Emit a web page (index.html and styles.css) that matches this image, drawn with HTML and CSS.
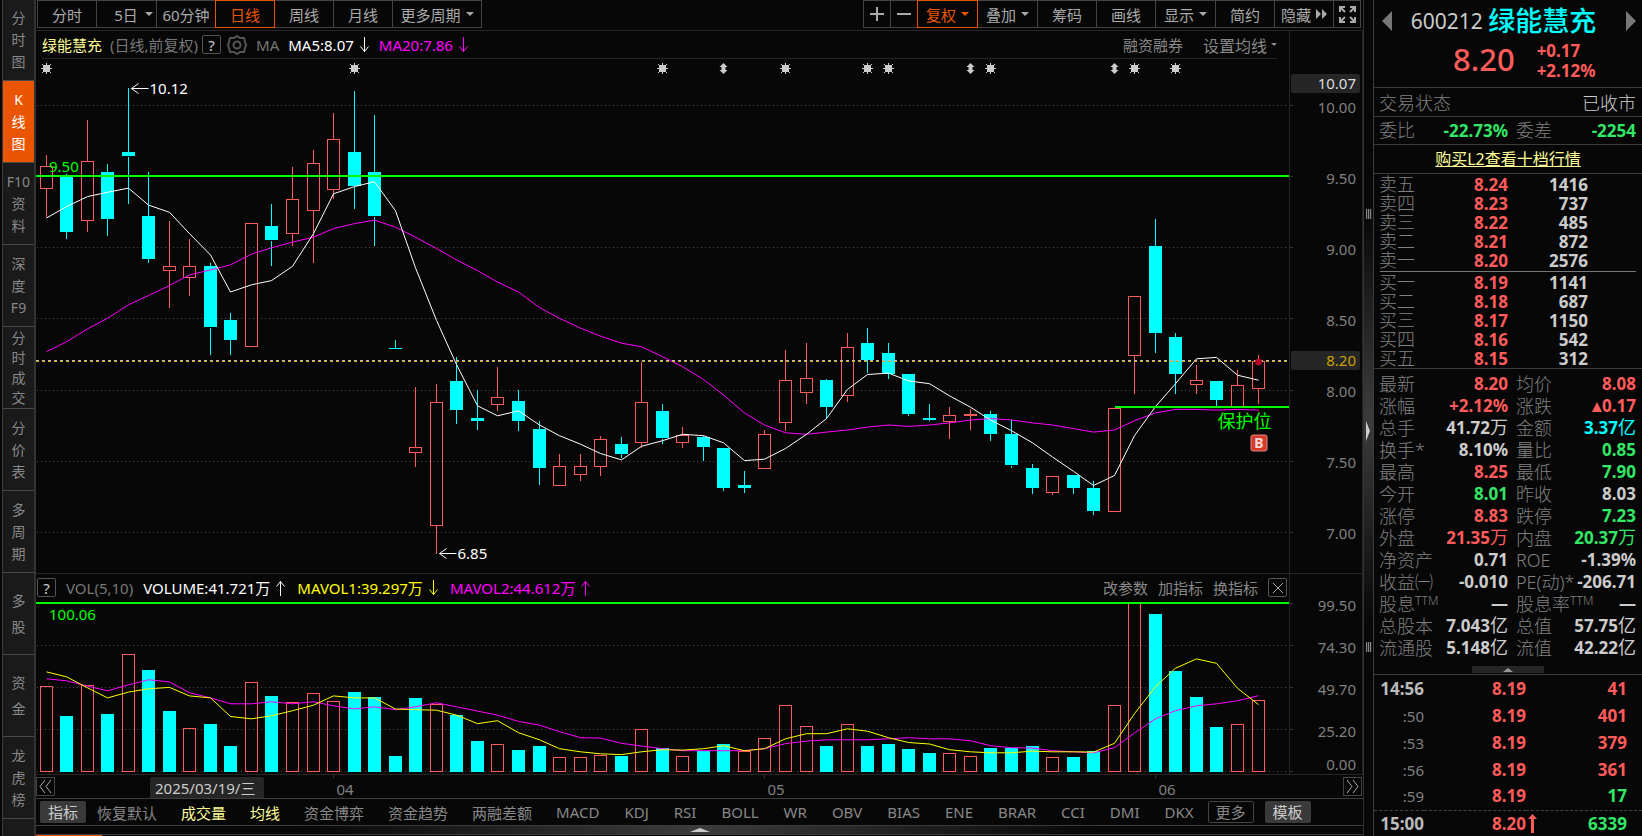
FILE: index.html
```
<!DOCTYPE html>
<html lang="zh-CN">
<head>
    <meta charset="UTF-8">
    <meta name="viewport" content="width=device-width, initial-scale=1.0">
    <title>绿能慧充 600212</title>
    <link rel="stylesheet" href="styles.css">
</head>
<body>

<div class="app">

    <nav class="side-nav">
        <a href="#"><span>分</span><span>时</span><span>图</span></a>
        <a href="#" class="active"><span>K</span><span>线</span><span>图</span></a>
        <a href="#"><span>F10</span><span>资</span><span>料</span></a>
        <a href="#"><span>深</span><span>度</span><span>F9</span></a>
        <a href="#" class="tight"><span>分</span><span>时</span><span>成</span><span>交</span></a>
        <a href="#"><span>分</span><span>价</span><span>表</span></a>
        <a href="#"><span>多</span><span>周</span><span>期</span></a>
        <a href="#" class="loose"><span>多</span><span>股</span></a>
        <a href="#" class="loose"><span>资</span><span>金</span></a>
        <a href="#"><span>龙</span><span>虎</span><span>榜</span></a>
    </nav>

    <main class="main">
        <div class="toolbar">
            <div class="btn-group">
                <button>分时</button>
                <button class="has-caret">5日<i class="caret"></i></button>
                <button>60分钟</button>
                <button class="active">日线</button>
                <button>周线</button>
                <button>月线</button>
                <button class="wide">更多周期<i class="caret"></i></button>
            </div>
            <div class="btn-group">
                <button class="icon-btn" aria-label="放大"><svg width="14" height="14"><path d="M7 0v14M0 7h14" stroke="#aaa" stroke-width="2"/></svg></button>
                <button class="icon-btn" aria-label="缩小"><svg width="14" height="14"><path d="M0 7h14" stroke="#aaa" stroke-width="2"/></svg></button>
                <button class="menu active">复权<i class="caret"></i></button>
                <button class="menu">叠加<i class="caret"></i></button>
                <button>筹码</button>
                <button>画线</button>
                <button class="menu">显示<i class="caret"></i></button>
                <button>简约</button>
                <button>隐藏<svg width="11" height="10"><path d="M0 0l5 5-5 5zM6 0l5 5-5 5z" fill="#aaa"/></svg></button>
                <button class="icon-btn" aria-label="全屏">
                    <svg width="17" height="17" fill="none" stroke="#aaa" stroke-width="2">
                        <path d="M1 6V1h5M1 1l5 5M11 1h5v5M16 1l-5 5M1 11v5h5M1 16l5-5M16 11v5h-5M16 16l-5-5"/>
                    </svg>
                </button>
            </div>
        </div>

        <section class="pane price-pane">
            <header class="pane-head ruled">
                <span class="stock">绿能慧充</span>
                <span class="muted">(日线,前复权)</span>
                <button class="help">?</button>
                <svg class="gear" width="20" height="20" fill="none" stroke="#555" stroke-width="2">
                    <path d="M10 1l3 2 4 0 1 4 1 3-1 3-1 4-4 0-3 2-3-2-4 0-1-4-1-3 1-3 1-4 4 0z"/>
                    <circle cx="10" cy="10" r="3.5"/>
                </svg>
                <span class="muted ma-name">MA</span>
                <span class="ind white">MA5:8.07<svg width="9" height="16"><path d="M4.500 0v15M.5 9.500l4 5 4-5" /></svg></span>
                <span class="ind magenta">MA20:7.86<svg width="9" height="16"><path d="M4.500 0v15M.5 9.500l4 5 4-5" /></svg></span>
                <a href="#" class="push">融资融券</a>
                <a href="#" class="ma-set">设置均线<i class="caret"></i></a>
            </header>
            <svg class="plot" id="pricePlot"></svg>
            <svg class="axis" id="priceAxis"></svg>
        </section>

        <section class="pane vol-pane">
            <header class="pane-head">
                <button class="help">?</button>
                <span class="muted">VOL(5,10)</span>
                <span class="ind white">VOLUME:41.721万<svg width="9" height="16"><path d="M4.500 16v-15M.5 6.500l4-5 4 5" /></svg></span>
                <span class="ind yellow">MAVOL1:39.297万<svg width="9" height="16"><path d="M4.500 0v15M.5 9.500l4 5 4-5" /></svg></span>
                <span class="ind magenta">MAVOL2:44.612万<svg width="9" height="16"><path d="M4.500 16v-15M.5 6.500l4-5 4 5" /></svg></span>
                <a href="#" class="push">改参数</a>
                <a href="#">加指标</a>
                <a href="#">换指标</a>
                <button class="help close" aria-label="关闭"><svg width="10" height="10"><path d="M0 0l10 10M10 0L0 10" stroke="#aaa"/></svg></button>
            </header>
            <svg class="plot" id="volPlot"></svg>
            <svg class="axis" id="volAxis"></svg>
        </section>

        <div class="date-row">
            <svg class="plot" id="dateAxis"></svg>
            <button class="page-btn prev" aria-label="向前"><svg width="13" height="13"><path d="M6 0L1 6.500l5 6.500M12 0L7 6.500l5 6.500"/></svg></button>
            <button class="page-btn next" aria-label="向后"><svg width="13" height="13"><path d="M1 0l5 6.500L1 13M7 0l5 6.500L7 13"/></svg></button>
        </div>

        <div class="tabs">
            <button class="solid">指标</button>
            <a href="#">恢复默认</a>
            <a href="#" class="on">成交量</a>
            <a href="#" class="on">均线</a>
            <a href="#">资金博弈</a>
            <a href="#">资金趋势</a>
            <a href="#">两融差额</a>
            <a href="#">MACD</a>
            <a href="#">KDJ</a>
            <a href="#">RSI</a>
            <a href="#">BOLL</a>
            <a href="#">WR</a>
            <a href="#">OBV</a>
            <a href="#">BIAS</a>
            <a href="#">ENE</a>
            <a href="#">BRAR</a>
            <a href="#">CCI</a>
            <a href="#">DMI</a>
            <a href="#">DKX</a>
            <button class="outline">更多</button>
            <button class="solid">模板</button>
        </div>
        <div class="drawer"><svg width="20" height="4"><path d="M0 4l10-4 10 4z" fill="#ccc"/></svg></div>
        <div class="drawer-tabs"></div>
    </main>

    <div class="splitter">
        <i class="grip"></i>
        <svg width="5" height="20"><path d="M0 0l4 10-4 10z" fill="#ccc"/></svg>
        <i class="grip"></i>
    </div>

    <aside class="quote">
        <div class="quote-head">
            <div class="quote-name">
                <button class="step" aria-label="上一只"><svg width="10" height="20"><path d="M10 0v20L0 10z" fill="#777"/></svg></button>
                <span class="code">600212</span>
                <span class="name">绿能慧充</span>
                <button class="step" aria-label="下一只"><svg width="10" height="20"><path d="M0 0v20L10 10z" fill="#777"/></svg></button>
            </div>
            <div class="quote-price">
                <span class="last">8.20</span>
                <span class="chg">+0.17<br>+2.12%</span>
            </div>
        </div>

        <div class="line state"><span>交易状态</span><span class="val">已收市</span></div>

        <table class="pairs ratio">
            <tr><th>委比</th><td class="green">-22.73%</td><th>委差</th><td class="green">-2254</td></tr>
        </table>

        <div class="l2"><a href="#">购买L2查看十档行情</a></div>

        <table class="book">
            <tbody class="sell">
                <tr><th>卖五</th><td class="red">8.24</td><td>1416</td></tr>
                <tr><th>卖四</th><td class="red">8.23</td><td>737</td></tr>
                <tr><th>卖三</th><td class="red">8.22</td><td>485</td></tr>
                <tr><th>卖二</th><td class="red">8.21</td><td>872</td></tr>
                <tr><th>卖一</th><td class="red">8.20</td><td>2576</td></tr>
            </tbody>
        </table>
        <hr>
        <table class="book">
            <tbody>
                <tr><th>买一</th><td class="red">8.19</td><td>1141</td></tr>
                <tr><th>买二</th><td class="red">8.18</td><td>687</td></tr>
                <tr><th>买三</th><td class="red">8.17</td><td>1150</td></tr>
                <tr><th>买四</th><td class="red">8.16</td><td>542</td></tr>
                <tr><th>买五</th><td class="red">8.15</td><td>312</td></tr>
            </tbody>
        </table>

        <div class="details">
            <table class="pairs">
                <tr><th>最新</th><td class="red">8.20</td><th>均价</th><td class="red">8.08</td></tr>
                <tr><th>涨幅</th><td class="red">+2.12%</td><th>涨跌</th><td class="red"><i class="up"></i>0.17</td></tr>
                <tr><th>总手</th><td>41.72<span>万</span></td><th>金额</th><td class="cyan">3.37<span>亿</span></td></tr>
                <tr><th>换手*</th><td>8.10%</td><th>量比</th><td class="green">0.85</td></tr>
                <tr><th>最高</th><td class="red">8.25</td><th>最低</th><td class="green">7.90</td></tr>
                <tr><th>今开</th><td class="green">8.01</td><th>昨收</th><td>8.03</td></tr>
                <tr><th>涨停</th><td class="red">8.83</td><th>跌停</th><td class="green">7.23</td></tr>
                <tr><th>外盘</th><td class="red">21.35<span>万</span></td><th>内盘</th><td class="green">20.37<span>万</span></td></tr>
                <tr><th>净资产</th><td>0.71</td><th>ROE</th><td>-1.39%</td></tr>
                <tr><th>收益㈠</th><td>-0.010</td><th>PE(动)*</th><td>-206.71</td></tr>
                <tr><th>股息<sup>TTM</sup></th><td>—</td><th>股息率<sup>TTM</sup></th><td>—</td></tr>
                <tr><th>总股本</th><td>7.043<span>亿</span></td><th>总值</th><td>57.75<span>亿</span></td></tr>
                <tr><th>流通股</th><td>5.148<span>亿</span></td><th>流值</th><td>42.22<span>亿</span></td></tr>
            </table>
            <button class="fold" aria-label="收起"><svg width="10" height="4"><path d="M0 4l5-4 5 4z" fill="#999"/></svg></button>
        </div>

        <table class="ticks">
            <tr><th class="minute">14:56</th><td class="red">8.19</td><td class="red">41</td></tr>
            <tr><th>:50</th><td class="red">8.19</td><td class="red">401</td></tr>
            <tr><th>:53</th><td class="red">8.19</td><td class="red">379</td></tr>
            <tr><th>:56</th><td class="red">8.19</td><td class="red">361</td></tr>
            <tr><th>:59</th><td class="red">8.19</td><td class="green">17</td></tr>
            <tr class="closing"><th class="minute">15:00</th><td class="red">8.20<svg width="9" height="19"><path d="M3 19V5H0l4.500-5L9 5H6v14z" fill="#ff5b5b"/></svg></td><td class="green">6339</td></tr>
        </table>
    </aside>

</div>

<script src="chart.js"></script>
</body>
</html>
```

FILE: styles.css
```
* {
    box-sizing: border-box;
}

body {
    margin: 0;
    background: #070707;
    color: #ccc;
    font-family: "Noto Sans", "Noto Sans CJK SC", sans-serif;
    font-size: 15px;
    overflow: hidden;
}

a {
    color: inherit;
    text-decoration: none;
}

button {
    font: inherit;
    color: inherit;
    padding: 0;
    background: none;
    border: 1px solid #444;
}

svg {
    display: block;
}

.app {
    display: grid;
    grid-template-columns: 36px minmax(0, 1fr) 10px 269px;
    grid-template-rows: minmax(0, 1fr);
    height: 100vh;
    overflow: hidden;
}

/* colours */
.red { color: #ff5b5b; }
.green { color: #33e666; }
.cyan { color: #00ffff; }
.white { color: #fff; }
.yellow { color: #ffff00; }
.magenta { color: #ff00ff; }
.muted { color: #777; }

/* left navigation */
.side-nav {
    display: flex;
    flex-direction: column;
    margin-left: 2px;
    background: #1a1a1a;
    border-left: 1px solid #3c3c3c;
    border-right: 2px solid #333;
    font-size: 14px;
    line-height: 22px;
    color: #888;
    overflow: hidden;
}

.side-nav a {
    flex: none;
    display: flex;
    flex-direction: column;
    justify-content: center;
    align-items: center;
    height: 82px;
    border-bottom: 1px solid #4a4a4a;
}

.side-nav a:first-child {
    height: 81px;
}

.side-nav .active {
    background: #ea5504;
    color: #fff;
}

.side-nav .tight {
    line-height: 20px;
}

.side-nav .loose {
    line-height: 26px;
}

/* toolbar */
.main {
    display: flex;
    flex-direction: column;
    min-width: 0;
}

.toolbar {
    display: flex;
    justify-content: space-between;
    height: 30px;
    padding: 0 3px 0 1px;
}

.btn-group {
    display: flex;
    height: 28px;
    color: #aaa;
}

.btn-group button {
    display: flex;
    align-items: center;
    justify-content: center;
    gap: 5px;
    width: 60px;
    margin-right: -1px;
    white-space: nowrap;
}

.btn-group .has-caret {
    gap: 7px;
    padding-left: 14px;
    width: 61px;
}

.btn-group .menu {
    width: 61px;
}

.btn-group .wide {
    width: 90px;
}

.btn-group .icon-btn {
    width: 28px;
}

.btn-group .active {
    position: relative;
    border-color: #ea5504;
    color: #ea5504;
}

.caret {
    border: 4px solid transparent;
    border-top-color: currentColor;
    border-bottom: 0;
}

/* chart panes */
.pane {
    display: grid;
    grid-template-columns: minmax(0, 1fr) 74px;
    grid-template-rows: 28px minmax(0, 1fr);
    border-top: 1px solid #262626;
    min-height: 0;
}

.price-pane {
    flex: 543;
}

.vol-pane {
    flex: 201;
}

.pane-head {
    display: flex;
    align-items: center;
    gap: 10px;
    padding: 0 2px 0 1px;
    white-space: nowrap;
}

.plot {
    width: 100%;
    height: 100%;
    overflow: hidden;
}

.axis {
    grid-column: 2;
    grid-row: 1 / 3;
    width: 100%;
    height: 100%;
    border-left: 1px solid #262626;
    border-right: 1px solid #262626;
}

.pane-head .stock {
    margin-right: 4px;
    color: #ffff99;
}

.pane-head .help {
    display: flex;
    align-items: center;
    justify-content: center;
    width: 19px;
    height: 19px;
    border-radius: 2px;
    border-color: #555;
}

.pane-head a {
    color: #888;
}

.pane-head .push {
    margin-left: auto;
}

.pane-head .ma-set {
    display: flex;
    align-items: center;
    gap: 4px;
    margin-left: 16px;
    font-size: 16px;
}

.ma-set .caret {
    border-width: 3px 3px 0;
}

.ind {
    display: flex;
    align-items: center;
    gap: 6px;
    margin-right: 2px;
}

.ind svg {
    fill: none;
    stroke: currentColor;
}

.pane-head.ruled {
    margin: 0 12px 0 6px;
    padding: 0;
    gap: 4px;
    border-bottom: 1px solid #262626;
}

.ruled .help {
    margin-right: 2px;
}

.gear,
.ma-name {
    margin-right: 5px;
}

.ruled .ind {
    margin-right: 6px;
}

/* svg parts drawn by chart.js */
.grid-line {
    stroke: #4a4a4a;
    stroke-dasharray: 1 3;
}

.grid-line,
.tick,
.wick,
.candle,
.level {
    shape-rendering: crispEdges;
}

.tick {
    stroke: #333;
}

.rise {
    fill: none;
    stroke: #ff5b5b;
}

.fall {
    fill: #00ffff;
    stroke: none;
}

line.fall {
    stroke: #00ffff;
}

.ma {
    fill: none;
    stroke-width: 1;
}

.axis-text {
    fill: #808080;
    font-size: 15px;
}

.tag {
    fill: #262626;
}

/* dates */
.date-row {
    position: relative;
    display: grid;
    grid-template-columns: minmax(0, 1fr) 74px;
    height: 24px;
    border-top: 1px solid #262626;
}

.page-btn {
    position: absolute;
    top: 2px;
    display: flex;
    align-items: center;
    justify-content: center;
    width: 19px;
    height: 19px;
    background: #070707;
}

.page-btn path {
    fill: none;
    stroke: #aaa;
}

.page-btn.prev {
    left: 0;
}

.page-btn.next {
    right: 1px;
}

/* indicator tabs */
.tabs {
    display: flex;
    align-items: center;
    gap: 24px;
    height: 28px;
    padding-left: 4px;
    border-top: 1px solid #3c3c3c;
    border-bottom: 1px solid #3c3c3c;
    color: #888;
    white-space: nowrap;
}

.tabs a:nth-child(n+8) {
    margin-right: 1px;
}

.tabs .on {
    color: #ffff99;
}

.tabs button {
    width: 46px;
    height: 22px;
    line-height: 20px;
    border-radius: 2px;
}

.tabs .solid {
    background: #3a3a3a;
    border: 0;
    color: #ccc;
    margin-right: -13px;
}

.tabs .outline {
    margin: 0 -13px 0 -11px;
}

.drawer {
    display: flex;
    align-items: center;
    justify-content: center;
    height: 9px;
    background: linear-gradient(90deg, #070707 20%, #3c3c3c 50%, #070707 80%);
    border-bottom: 1px solid #3c3c3c;
}

.drawer-tabs {
    width: 66px;
    height: 1px;
    background: #ea5504;
}

/* splitter */
.splitter {
    display: flex;
    flex-direction: column;
    align-items: center;
    justify-content: space-between;
    padding: 25vh 0 22vh;
    border-left: 1px solid #333;
    background: linear-gradient(#070707 25%, #3c3c3c 50%, #070707 75%);
}

.grip {
    width: 6px;
    height: 10px;
    background: repeating-linear-gradient(90deg, #888 0 1px, #222 1px 2px);
}

/* quote panel */
.quote {
    display: flex;
    flex-direction: column;
    border-left: 1px solid #3c3c3c;
    font-size: 17px;
}

.quote-head {
    height: 88px;
    border-bottom: 1px solid #3c3c3c;
}

.quote-name {
    display: flex;
    align-items: center;
    justify-content: space-between;
    height: 41px;
    padding: 0 6px 0 8px;
}

.step {
    border: 0;
}

.code {
    margin-left: 13px;
    font-size: 21px;
}

.name {
    margin-right: 24px;
    font-size: 27px;
    font-weight: 500;
    line-height: 40px;
    color: #00ffff;
}

.quote-price {
    display: flex;
    gap: 22px;
    padding-left: 79px;
    color: #ff5b5b;
}

.last {
    font-size: 31px;
    font-weight: 500;
    line-height: 36px;
}

.chg {
    font-weight: bold;
    line-height: 20px;
}

.line {
    display: flex;
    justify-content: space-between;
    align-items: center;
    height: 29px;
    padding: 0 6px 0 5px;
    border-bottom: 1px solid #3c3c3c;
    font-size: 18px;
    color: #808080;
    font-weight: 300;
}

.line .val {
    color: #ccc;
}

.l2 {
    height: 29px;
    line-height: 28px;
    border-bottom: 1px solid #3c3c3c;
    text-align: center;
    font-size: 16px;
}

.l2 a {
    color: #ffff99;
    text-decoration: underline;
}

.quote table {
    width: 100%;
    border-collapse: collapse;
    table-layout: fixed;
}

.quote th,
.quote td {
    padding: 0;
    vertical-align: middle;
    white-space: nowrap;
}

.quote th {
    text-align: left;
    font-size: 18px;
    font-weight: 300;
    color: #808080;
}

.quote td {
    text-align: right;
    font-weight: bold;
}

.quote td span {
    font-size: 18px;
    font-weight: 400;
    line-height: 1;
}

.quote .pairs th:first-child,
.quote .book th {
    width: 62px;
    padding-left: 5px;
}

.quote .pairs th:nth-child(3) {
    width: 62px;
    padding-left: 8px;
}

.pairs td:nth-child(2),
.book td:nth-child(2) {
    width: 72px;
}

.quote .pairs td:last-child {
    padding-right: 6px;
}

.quote .book td:last-child {
    padding-right: 54px;
}

.pairs tr > * {
    height: 22px;
    line-height: 22px;
}

.pairs sup {
    font-size: 12px;
    line-height: 0;
    vertical-align: 6px;
}

.quote .ratio {
    border-bottom: 1px solid #3c3c3c;
}

.ratio tr > * {
    height: 27px;
    line-height: 27px;
}

.book {
    margin-top: 1px;
}

.book tr > * {
    height: 19px;
    line-height: 19px;
}

.quote hr {
    width: calc(100% - 12px);
    height: 1px;
    margin: 1px 6px 0;
    border: 0;
    background: #777;
}

.up {
    display: inline-block;
    border: 5px solid transparent;
    border-top: 0;
    border-bottom: 10px solid #ff5b5b;
}

.details {
    border-top: 1px solid #3c3c3c;
    border-bottom: 1px solid #3c3c3c;
    padding-top: 4px;
}

.fold {
    display: flex;
    align-items: center;
    justify-content: center;
    width: 72px;
    height: 7px;
    margin: 7px auto 1px;
    background: #262626;
    border: 0;
}

.ticks tr > * {
    height: 27px;
    line-height: 26px;
}

.quote .ticks th {
    width: 50px;
    font-size: 15px;
    font-weight: 400;
    text-align: right;
}

.quote .ticks .minute {
    font-size: 17px;
    font-weight: bold;
    color: #bbb;
}

.ticks td:nth-child(2) {
    width: 102px;
}

.quote .ticks td:last-child {
    padding-right: 15px;
}

.ticks td svg {
    float: right;
    margin: 3px -11px 0 2px;
}

.ticks .closing > * {
    height: 26px;
    line-height: 25px;
    border-top: 1px dashed #444;
}
```

FILE: chart.js
```
// [type, body top, body bottom, high, low, volume, volume type if it differs]
const days = [
    ['r', 9.57, 9.42, 9.65, 9.22, 49.9], ['f', 9.50, 9.11, 9.52, 9.06, 32.3],
    ['r', 9.61, 9.19, 9.90, 9.11, 50.4], ['f', 9.53, 9.20, 9.59, 9.08, 33.5],
    ['f', 9.67, 9.64, 10.12, 9.31, 68.8, 'r'], ['f', 9.22, 8.92, 9.53, 8.89, 59.5],
    ['r', 8.87, 8.84, 9.19, 8.58, 35.3, 'f'], ['r', 8.87, 8.79, 9.06, 8.66, 25],
    ['f', 8.87, 8.44, 8.89, 8.25, 27.6], ['f', 8.49, 8.35, 8.54, 8.25, 14.6],
    ['r', 9.17, 8.31, 9.17, 8.30, 52.2], ['f', 9.15, 9.05, 9.31, 8.87, 44.1],
    ['r', 9.34, 9.10, 9.57, 9.01, 40.4], ['r', 9.59, 9.26, 9.69, 8.89, 45.7],
    ['r', 9.76, 9.41, 9.95, 9.34, 41], ['f', 9.67, 9.43, 10.10, 9.27, 46.5],
    ['f', 9.53, 9.22, 9.93, 9.01, 43.5], ['f', 8.29, 8.29, 8.35, 8.29, 8.7],
    ['r', 7.60, 7.56, 8.02, 7.46, 43, 'f'], ['r', 7.91, 7.05, 8.04, 6.85, 39.2],
    ['f', 8.06, 7.86, 8.23, 7.76, 32.9], ['f', 7.80, 7.78, 8.00, 7.72, 17.5],
    ['r', 7.95, 7.90, 8.16, 7.85, 15.6], ['f', 7.92, 7.78, 8.00, 7.71, 12.2],
    ['f', 7.72, 7.45, 7.78, 7.33, 14.6], ['r', 7.46, 7.33, 7.55, 7.33, 7.9],
    ['r', 7.46, 7.41, 7.55, 7.36, 7.9], ['r', 7.65, 7.46, 7.68, 7.40, 9.1],
    ['f', 7.62, 7.55, 7.67, 7.52, 8.7], ['r', 7.91, 7.63, 8.20, 7.59, 24.4],
    ['f', 7.85, 7.66, 7.90, 7.62, 13.4], ['r', 7.68, 7.63, 7.74, 7.59, 8.5],
    ['f', 7.67, 7.60, 7.68, 7.50, 11.8], ['f', 7.59, 7.31, 7.59, 7.29, 15.8],
    ['f', 7.33, 7.31, 7.43, 7.28, 11.4, 'r'], ['r', 7.69, 7.45, 7.72, 7.45, 19.1],
    ['r', 8.07, 7.77, 8.28, 7.71, 38.6], ['r', 8.08, 7.98, 8.33, 7.90, 26.2],
    ['f', 8.07, 7.88, 8.08, 7.80, 14.6], ['r', 8.30, 7.96, 8.40, 7.92, 27.4],
    ['f', 8.33, 8.21, 8.44, 8.12, 14.6], ['f', 8.26, 8.11, 8.33, 8.08, 15.8],
    ['f', 8.11, 7.83, 8.11, 7.82, 12.8], ['f', 7.80, 7.79, 7.90, 7.78, 10.4],
    ['r', 7.82, 7.78, 7.88, 7.66, 10.2], ['r', 7.83, 7.82, 7.87, 7.72, 8.5],
    ['f', 7.83, 7.69, 7.85, 7.64, 13.4], ['f', 7.69, 7.47, 7.79, 7.45, 13.4],
    ['f', 7.45, 7.31, 7.48, 7.27, 14.6], ['r', 7.39, 7.28, 7.39, 7.26, 7.9],
    ['f', 7.40, 7.31, 7.40, 7.27, 8.1], ['f', 7.31, 7.15, 7.36, 7.12, 11.6],
    ['r', 7.87, 7.15, 7.87, 7.15, 38.6], ['r', 8.66, 8.24, 8.66, 7.97, 99.5],
    ['f', 9.01, 8.40, 9.20, 8.26, 92.6], ['f', 8.37, 8.11, 8.40, 7.97, 58.9],
    ['r', 8.07, 8.04, 8.18, 7.97, 43.5, 'f'], ['f', 8.06, 7.93, 8.06, 7.88, 25.8],
    ['r', 8.03, 7.88, 8.14, 7.88, 27.4], ['r', 8.20, 8.01, 8.25, 7.90, 41.6]
];

const ma5 = [9.21, 9.29, 9.36, 9.39, 9.42, 9.30, 9.25, 9.10, 8.95, 8.69, 8.74, 8.77, 8.87, 9.10, 9.38, 9.43, 9.465, 9.26, 8.86, 8.49,
    8.18, 7.89, 7.82, 7.855, 7.755, 7.68, 7.62, 7.555, 7.51, 7.605, 7.645, 7.69, 7.68, 7.63, 7.505, 7.515, 7.59, 7.69, 7.80, 8.005,
    8.11, 8.12, 8.065, 8.045, 7.96, 7.88, 7.79, 7.715, 7.63, 7.53, 7.43, 7.33, 7.40, 7.68, 7.885, 8.045, 8.22, 8.23, 8.105, 8.07];

const ma20 = [8.27, 8.34, 8.43, 8.505, 8.60, 8.665, 8.735, 8.81, 8.845, 8.88, 8.955, 9.00, 9.04, 9.075, 9.135, 9.17, 9.195, 9.145, 9.075, 8.995,
    8.915, 8.84, 8.76, 8.69, 8.58, 8.505, 8.435, 8.38, 8.33, 8.305, 8.235, 8.165, 8.075, 7.965, 7.84, 7.755, 7.70, 7.69, 7.705, 7.72,
    7.74, 7.755, 7.745, 7.755, 7.77, 7.79, 7.80, 7.79, 7.77, 7.755, 7.73, 7.705, 7.72, 7.785, 7.84, 7.865, 7.865, 7.86, 7.865, 7.86];

const mavol1 = [58.7, 55.8, 49.3, 43.3, 46.7, 48.7, 49.5, 44.5, 43.3, 32.3, 30.9, 32.7, 35.7, 39, 44.5, 43.3, 43.3, 36.7, 36.3, 36,
    33.1, 28, 29.8, 22.7, 18.5, 13.2, 11.4, 10.2, 9.7, 11.4, 12.6, 12.4, 13.2, 15, 12, 13.2, 19.1, 22.1, 22.1, 25,
    23.6, 19.7, 16.9, 16, 12.6, 11.4, 10.8, 10.8, 11.8, 11.4, 11.4, 11.2, 16.4, 34, 49.9, 60.9, 66.4, 63.8, 49, 39.3];

const mavol2 = [54.6, 53.4, 50.2, 47.5, 51, 54, 52.8, 46.3, 43.3, 39.8, 39.8, 41, 39.8, 41, 38.6, 36.8, 38, 36.3, 38, 40.4,
    38, 35.5, 33.1, 29.4, 27.2, 23.3, 19.7, 19.5, 16.4, 14.8, 13.2, 12, 12, 12, 12, 13.2, 16.2, 17.7, 18.5, 18.5,
    18.5, 19.1, 19.7, 19.1, 19.1, 17.9, 15, 13.8, 13.6, 12, 11.4, 10.8, 13.8, 22.5, 30.9, 35.7, 38.6, 39.8, 41.6, 44.6];

const stars = [0, 15, 30, 36, 40, 41, 46, 53, 55];
const arrows = [33, 45, 52];
const months = [[14, '04'], [35, '05'], [54, '06']];

const TOP_PRICE = 10.327;
const LOW_PRICE = 6.715;
const MAX_VOL = 99.5;
const HEAD = 28;

const get = (id) => document.getElementById(id);

function line(x1, y1, x2, y2, cls, extra = '') {
    return `<line x1="${x1}" y1="${y1}" x2="${x2}" y2="${y2}" class="${cls}" ${extra}/>`;
}

function text(x, y, str, fill, extra = '') {
    return `<text x="${x}" y="${y}" fill="${fill}" ${extra}>${str}</text>`;
}

function half(v) {
    return Math.floor(v) + 0.5;
}

function xAt(i, w) {
    return Math.floor(10 + i * (w - 41) / (days.length - 1)) + 0.5;
}

function bar(x, top, bottom, type) {
    if (type === 'r') {
        return `<rect x="${x - 6}" y="${half(top)}" width="12" height="${Math.max(half(bottom) - half(top), 1)}" class="candle rise"/>`;
    }
    const y = Math.floor(top);
    return `<rect x="${x - 6.5}" y="${y}" width="13" height="${Math.max(Math.floor(bottom) - y, 1)}" class="candle fall"/>`;
}

function curve(values, w, y, color) {
    const points = values.map((v, i) => `${xAt(i, w)},${y(v).toFixed(1)}`).join(' ');
    return `<polyline points="${points}" class="ma" stroke="${color}"/>`;
}

function drawPrice() {
    const svg = get('pricePlot');
    const w = svg.clientWidth;
    const h = svg.clientHeight;
    const y = (p) => (TOP_PRICE - p) / (TOP_PRICE - LOW_PRICE) * h;
    let out = '';
    let axis = '';

    for (let p = 10; p >= 7; p -= 0.5) {
        out += line(1, half(y(p)), w, half(y(p)), 'grid-line');
        axis += line(0, HEAD + half(y(p)), 3, HEAD + half(y(p)), 'tick');
        axis += text(66, HEAD + y(p) + 7, p.toFixed(2), '', 'class="axis-text" text-anchor="end"');
    }

    days.forEach(([type, top, bottom, high, low], i) => {
        const x = xAt(i, w);
        const cls = type === 'r' ? 'wick rise' : 'wick fall';
        out += line(x, y(high), x, y(top), cls);
        out += line(x, y(bottom), x, y(low), cls);
        out += bar(x, y(top), y(bottom), type);
    });

    out += curve(ma20, w, y, '#ff00ff');
    out += curve(ma5, w, y, '#ffffff');

    // horizontal levels
    const last = Math.floor(y(8.2));
    out += line(0, last - 0.5, w, last - 0.5, 'level', 'stroke="#bbb" stroke-dasharray="3 3"');
    out += line(0, last + 0.5, w, last + 0.5, 'level', 'stroke="#d8a810" stroke-dasharray="3 3"');
    const top = Math.floor(y(9.5));
    out += line(0, top, w, top, 'level', 'stroke="#00ff00" stroke-width="2"');
    out += text(13, top - 4, '9.50', '#00ff00');
    const guard = Math.floor(y(7.875));
    out += line(xAt(52, w), guard, w, guard, 'level', 'stroke="#00ff00" stroke-width="2"');

    // buy mark under the last candle
    const bx = xAt(59, w);
    out += line(bx, guard + 2, bx, guard + 27, 'level', 'stroke="#80001c" stroke-dasharray="3 3"');
    out += text(bx + 13, guard + 21, '保护位', '#00ff00', 'font-size="18" text-anchor="end"');
    out += `<circle cx="${bx}" cy="${last + 1}" r="3.5" fill="#b00028"/>`;
    out += `<rect x="${bx - 7.5}" y="${guard + 28}" width="16" height="16" rx="2" fill="#d63a2a" stroke="#e08a80"/>`;
    out += text(bx + 0.5, guard + 41, 'B', '#f0d8d4', 'font-size="14" font-weight="bold" text-anchor="middle"');

    // highest and lowest
    const hx = xAt(4, w);
    const hy = half(y(10.12));
    out += `<path d="M${hx + 20} ${hy}h-17m7-5l-7 5l7 5" fill="none" stroke="#fff"/>`;
    out += text(hx + 21, hy + 5, '10.12', '#fff');
    const lx = xAt(19, w);
    const ly = half(y(6.85));
    out += `<path d="M${lx + 20} ${ly}h-17m7-5l-7 5l7 5" fill="none" stroke="#fff"/>`;
    out += text(lx + 21, ly + 5, '6.85', '#fff');

    stars.forEach((i) => {
        const x = xAt(i, w);
        out += `<path d="M${x - 3.5} 6h7v7h-7z" fill="#ccc"/>`;
        out += `<path d="M${x} 4v11M${x - 5.5} 9.500h11M${x - 4.5} 5l9 9M${x + 4.5} 5l-9 9" stroke="#ccc"/>`;
    });
    arrows.forEach((i) => {
        const x = xAt(i, w);
        out += `<path d="M${x} 4l4 4h-2v3h2l-4 4l-4-4h2v-3h-2z" fill="#ccc"/>`;
    });

    // axis tags
    axis += `<rect x="1" y="${HEAD + 15}" width="69" height="19" rx="2" class="tag"/>`;
    axis += text(66, HEAD + 30, '10.07', '#ddd', 'text-anchor="end"');
    axis += `<rect x="1" y="${HEAD + last - 10}" width="69" height="19" rx="2" class="tag"/>`;
    axis += text(66, HEAD + last + 5, '8.20', '#c8a000', 'text-anchor="end"');

    svg.innerHTML = out;
    get('priceAxis').innerHTML = axis;
}

function drawVolume() {
    const svg = get('volPlot');
    const w = svg.clientWidth;
    const h = svg.clientHeight;
    const base = h - 3;
    const y = (v) => base - v / MAX_VOL * (h - 4);
    let out = '';
    let axis = '';

    ['99.50', '74.30', '49.70', '25.20', '0.00'].forEach((label, i) => {
        const gy = half(y(MAX_VOL * (4 - i) / 4));
        out += line(1, gy, w, gy, 'grid-line');
        axis += line(0, HEAD + gy, 3, HEAD + gy, 'tick');
        axis += text(66, HEAD + gy + (i === 4 ? -2 : 7), label, '', 'class="axis-text" text-anchor="end"');
    });

    days.forEach(([type, , , , , vol, volType = type], i) => {
        out += bar(xAt(i, w), y(vol), volType === 'r' ? base : base + 1, volType);
    });

    out += curve(mavol2, w, y, '#ff00ff');
    out += curve(mavol1, w, y, '#ffff00');
    out += line(0, 0, w, 0, 'level', 'stroke="#00ff00" stroke-width="3"');
    out += text(13, 18, '100.06', '#00ff00');

    svg.innerHTML = out;
    get('volAxis').innerHTML = axis;
}

function drawDates() {
    const svg = get('dateAxis');
    const w = svg.clientWidth;
    let out = '';

    months.forEach(([i, label]) => {
        out += line(xAt(i, w), 0, xAt(i, w), 3, 'tick');
        out += text(xAt(i, w) + 3, 20, label, '', 'class="axis-text"');
    });
    out += '<rect x="114" y="2" width="114" height="22" rx="2" class="tag"/>';
    out += text(119, 19, '2025/03/19/三', '#ccc');
    svg.innerHTML = out;
}

function draw() {
    drawPrice();
    drawVolume();
    drawDates();
}

window.addEventListener('resize', draw);
draw();
```
